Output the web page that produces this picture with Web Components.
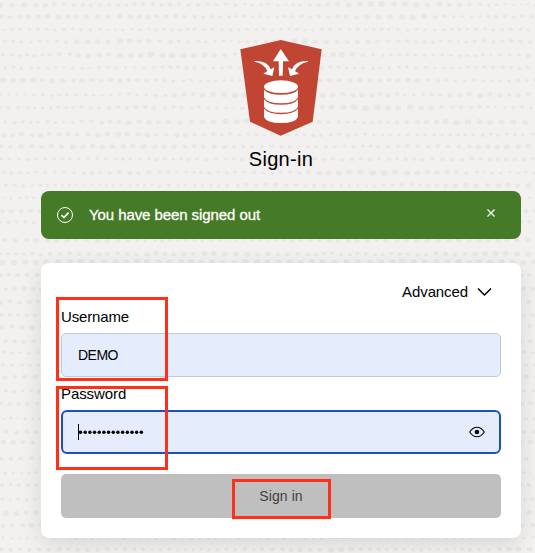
<!DOCTYPE html>
<html lang="en"><head><meta charset="utf-8"><title>Sign-in</title>
<style>html,body{margin:0;height:100%;overflow:hidden}body{font:15px/20px "Liberation Sans",Arial,sans-serif;color:#000;background:#f2f1ef}</style></head>
<body><sign-in-page></sign-in-page>
<script>
const define=(name,html,init)=>customElements.define(name,class extends HTMLElement{
  connectedCallback(){
    if(this.shadowRoot)return;
    const t=document.createElement('template');t.innerHTML=html;
    this.attachShadow({mode:'open'}).append(t.content.cloneNode(true));
    if(init)init(this.shadowRoot,this);
  }
});

define('dot-backdrop',`<style>:host{position:absolute;inset:0;z-index:-1;display:block}svg{display:block}</style><svg width="535" height="553" fill="#e8e7e5"></svg>`,root=>{
  // Each row: vertical centre, then dot sizes (0-9) sampled evenly across the width
  const rows=[[4.7,'864355323787531'],[16.7,'465654324576243'],[29.5,'233233333333333'],[41.5,'436754246553345'],[55,'335677425634336'],[67.7,'333334444433344'],[80.5,'765543235655335'],[94.7,'223345776643654'],[107.5,'333553335786523'],[122,'333566766345777'],[134.7,'555655433433333'],[146.5,'466666443345567'],[159,'343343444444444'],[172.5,'334553335786523'],[185.5,'532233454334666'],[198,'2'],[211,'5'],[222,'3'],[240.5,'665533224566656'],[254,'344556654334577'],[262,'7'],[275,'4'],[289,'5'],[302,'5'],[315,'3'],[327,'6'],[341.5,'5'],[353,'3'],[365,'3'],[377,'5'],[391,'3'],[404,'5'],[418.5,'2'],[432,'5'],[442.5,'6'],[458.5,'5'],[473,'2'],[485,'4'],[499.5,'3'],[513,'6'],[525.5,'5'],[538,'2'],[549.5,'455432345643356']];
  let seed=17;const rnd=()=>(seed=(seed*16807)%2147483647)/2147483647;
  let out='';
  for(const [y,p] of rows){
    let x=rnd()*6;
    while(x<536){
      const f=x/535*(p.length-1),i=Math.floor(f),a=+p[i],b=+(p[i+1]??p[i]);
      const s=(a+(b-a)*(f-i)),r=.95+s*.28+(rnd()-.5)*.5;
      out+=`<ellipse cx="${x.toFixed(1)}" cy="${(y+(rnd()-.5)*1.4).toFixed(1)}" rx="${(r*1.05).toFixed(1)}" ry="${(r*.88).toFixed(1)}"/>`;
      x+=5.4+s*.6+rnd()*2.6;
    }
  }
  root.querySelector('svg').innerHTML=out;
});

define('app-logo',`<style>:host{display:block;width:82px;height:97px}svg{display:block}</style>
<svg width="82" height="97" viewBox="30 27 246 291"><path fill="#c04532" d="M152 30 275 58 248 275 152 317 60 275 31 58Z"/>
<g fill="#fff"><path d="M152 57 177 94H159L158 137H147L146 94H129Z"/>
<path d="M74 93Q113 92 122 118L133 112 127 138 100 131 112 123Q103 101 74 95Z"/>
<path d="M234 93Q195 92 186 118L174 112 180 138 207 131 195 123Q205 101 234 95Z"/>
<ellipse cx="153" cy="170" rx="51" ry="19"/>
<path d="M102 179Q114 194 153 194T204 179V202Q197 220 153 220T102 202Z"/>
<path d="M102 208Q114 224.500 153 224.500T204 208V230Q197 248 153 248T102 230Z"/>
<path d="M102 236.500Q114 252.500 153 252.500T204 236.500V261Q197 279 153 279T102 261Z"/></g></svg>`);

define('status-banner',`<style>:host{box-sizing:border-box;display:flex;align-items:center;height:48px;padding:0 24px 0 16px;border-radius:8px;background:#457a27;color:#fff;font-size:15px;-webkit-text-stroke:.3px #fff}
span{flex:1;margin-left:16px;letter-spacing:-.08px}svg{fill:none;stroke:#fff;display:block}.x{margin-top:-4px}</style>
<svg width="16" height="16" viewBox="0 0 16 16"><circle cx="8" cy="8" r="7.5" stroke-width="1"/><path d="m4.5 8.2 2.4 2.3 4.7-4.9" stroke-width="1.6"/></svg>
<span><slot></slot></span><svg class="x" width="12" height="12" viewBox="0 0 12 12"><path d="m2.5 2.5 7 7m0-7-7 7" stroke-width="1.3"/></svg>`);

define('text-field',`<style>:host{display:block}label{display:block;height:20px;line-height:20px;letter-spacing:-.16px}:host([focused]) label{letter-spacing:-.08px}
.box{box-sizing:border-box;height:44px;margin-top:6px;display:flex;align-items:center;padding:0 16px;border:1px solid #bfc9da;border-radius:5px;background:#e5ecfb;font-size:14px;letter-spacing:-.5px}
:host([focused]) .box{border:2px solid #1e50bd;padding:0 14px 0 15px;border-radius:6px}
.value{flex:1;display:flex;align-items:center}</style><label></label><div class="box"><div class="value"><slot></slot></div><slot name="end"></slot></div>`,(root,host)=>{root.querySelector('label').textContent=host.getAttribute('label')});

define('masked-value',`<style>:host{display:flex;align-items:center;height:16px}.caret{width:1px;height:16px;background:#000}svg{display:block}</style><i class="caret"></i><svg width="66" height="16"></svg>`,root=>{
  root.querySelector('svg').innerHTML=Array.from({length:14},(_,i)=>`<circle cx="${1.5+i*4.68}" cy="8.2" r="1.75"/>`).join('');
});
define('eye-icon',`<style>:host{display:block}svg{display:block}</style><svg width="16" height="12" viewBox="0 0 16 12"><path d="M.7 6Q3.8 1.2 8 1.2T15.3 6Q12.2 10.8 8 10.8T.7 6Z" fill="none" stroke="#000" stroke-width="1.1"/><circle cx="8" cy="6" r="2.3"/></svg>`);
define('submit-button',`<style>:host{display:block}button{display:block;width:100%;height:44px;border:0;border-radius:5px;background:#bfbfbf;color:#45403c;font:14px/20px "Liberation Sans",Arial,sans-serif;letter-spacing:.1px;padding:0}</style><button><slot></slot></button>`);
define('advanced-toggle',`<style>:host{display:flex;justify-content:flex-end;align-items:center;gap:9px;height:20px;padding-right:9px;letter-spacing:-.1px}svg{fill:none;stroke:#000;stroke-width:1.5;display:block}</style><span><slot></slot></span><svg width="15" height="10" viewBox="0 0 15 10"><path d="m1 1.5 6.500 6.500L14 1.500"/></svg>`);
define('highlight-box',`<style>:host{position:absolute;box-sizing:border-box;border:3px solid #ff3019;pointer-events:none}</style>`);

define('sign-in-card',`<style>:host{box-sizing:border-box;display:block;height:275px;padding:19px 20px 20px;background:#fff;border-radius:8px;box-shadow:0 6px 22px rgba(0,0,0,.11)}
text-field{margin-top:5px}.pw{margin-top:7px}submit-button{margin-top:20px}</style>
<advanced-toggle>Advanced</advanced-toggle><text-field label="Username">DEMO</text-field>
<text-field class="pw" focused label="Password"><masked-value></masked-value><eye-icon slot="end"></eye-icon></text-field>
<submit-button>Sign in</submit-button>`);

define('sign-in-page',`<style>:host{position:relative;isolation:isolate;display:block;width:535px;height:553px;overflow:hidden}
main{display:flex;flex-direction:column;width:480px;margin-left:41px;padding-top:39px}app-logo{align-self:center}
h1{font-size:20px;line-height:24px;font-weight:400;letter-spacing:.3px;margin:11px 0 0;text-align:center}status-banner{margin-top:20px}sign-in-card{margin-top:24px}
.u{left:56px;top:297px;width:112px;height:84px}.p{left:56px;top:386px;width:112px;height:84px}.s{left:232px;top:479px;width:99px;height:40px}</style>
<dot-backdrop></dot-backdrop><main><app-logo></app-logo><h1>Sign-in</h1><status-banner>You have been signed out</status-banner><sign-in-card></sign-in-card></main>
<highlight-box class="u"></highlight-box><highlight-box class="p"></highlight-box><highlight-box class="s"></highlight-box>`);
</script></body></html>
